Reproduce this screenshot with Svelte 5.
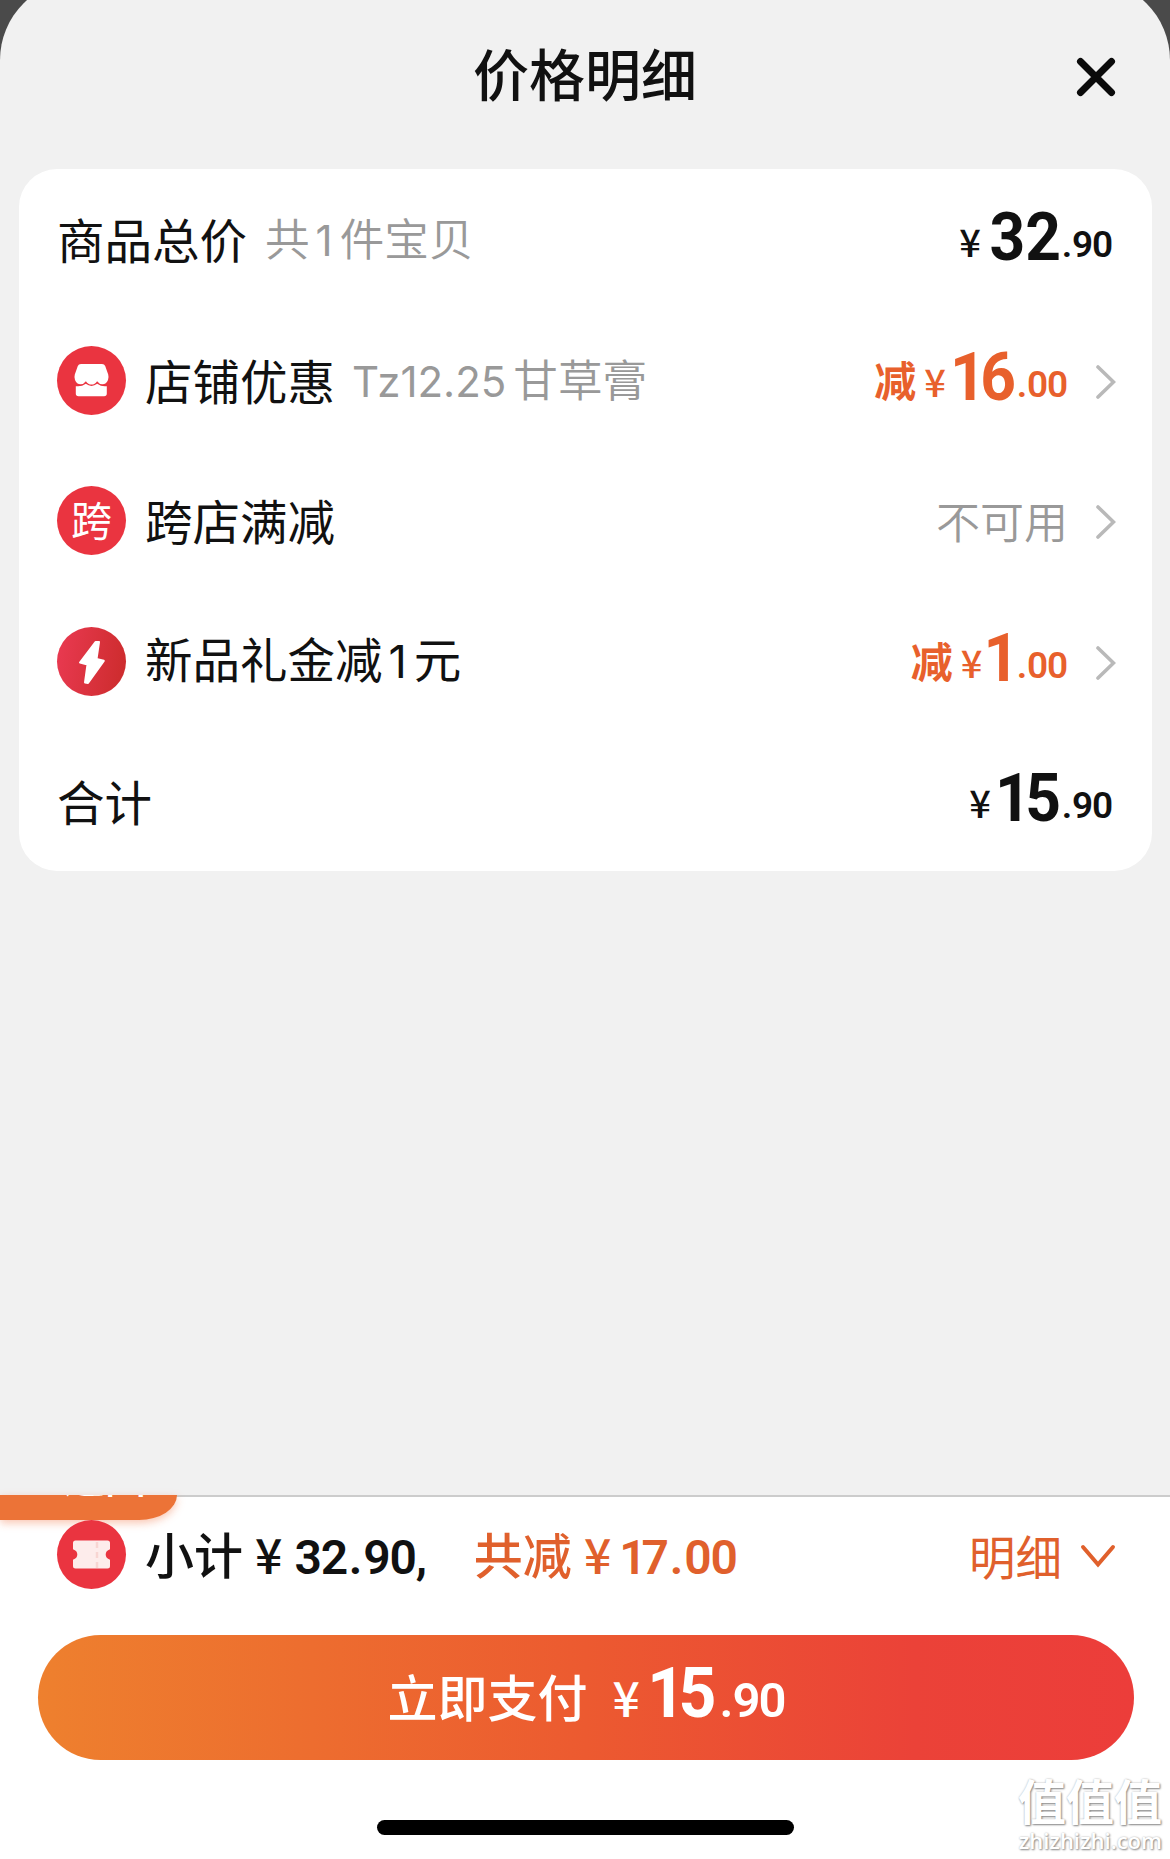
<script lang="ts">
	interface Price {
		int: string;
		dec: string;
	}

	interface Row {
		id: string;
		label: string;
		note?: string;
		icon?: 'shop' | 'cross' | 'bolt';
		price?: Price;
		off?: boolean;
		status?: string;
	}

	const rows: Row[] = [
		{ id: 'goods', label: '商品总价', note: '共1件宝贝', price: { int: '32', dec: '.90' } },
		{ id: 'shop', label: '店铺优惠', note: 'Tz12.25甘草膏', icon: 'shop', price: { int: '16', dec: '.00' }, off: true },
		{ id: 'cross', label: '跨店满减', icon: 'cross', status: '不可用' },
		{ id: 'gift', label: '新品礼金减1元', icon: 'bolt', price: { int: '1', dec: '.00' }, off: true },
		{ id: 'total', label: '合计', price: { int: '15', dec: '.90' } }
	];

	// latin digits get their own face and size inside chinese labels
	function split(text: string) {
		return text.split(/([A-Za-z0-9.]+)/).filter(Boolean);
	}

	const isLatin = (part: string) => /^[A-Za-z0-9.]/.test(part);
</script>

{#snippet mixed(text: string)}
	{#each split(text) as part}<span class:latin={isLatin(part)}>{part}</span>{/each}
{/snippet}

{#snippet digits(text: string)}
	{#each text.split('') as d}<span class:one={d === '1'} class:dot={d === '.'}>{d}</span>{/each}
{/snippet}

{#snippet amount(price: Price)}
	<span class="amount">
		<span class="yen">¥</span><span class="int">{@render digits(price.int)}</span><span class="dec">{@render digits(price.dec)}</span>
	</span>
{/snippet}

<div class="page">
	<section class="sheet">
		<header class="header">
			<span class="side"></span>
			<h1>价格明细</h1>
			<button class="side close" aria-label="close">
				<svg width="40" height="40" viewBox="0 0 40 40" fill="none" stroke="#0b0b0b" stroke-width="7" stroke-linecap="round">
					<path d="M4.500 4.500 35.500 35.500M35.500 4.500 4.500 35.500" />
				</svg>
			</button>
		</header>

		<div class="card">
			{#each rows as row (row.id)}
				<div class="row">
					{#if row.icon}
						<div class="badge" class:bolt={row.icon === 'bolt'}>
							{#if row.icon === 'shop'}
								<svg width="69" height="69" viewBox="0 0 69 69" fill="#fff">
									<path d="M24 18h21q2.400 0 3.200 2l3 8.500q.8 2.800-.2 5.500-1.600 4.200-5.600 4.200-3.200 0-5.300-3-2.200 3.400-5.600 3.400t-5.600-3.400q-2.100 3-5.300 3-4 0-5.600-4.200-1-2.700-.2-5.500l3-8.500q.8-2 3.200-2Z" />
									<path d="M18.800 40.200q5.700.8 10-2.400 5.700 4.200 11.400 0 4.500 3.200 9.600 2.400v7.300q0 2.700-2.700 2.700H21.500q-2.700 0-2.700-2.700Z" />
								</svg>
							{:else if row.icon === 'cross'}
								<span class="glyph">跨</span>
							{:else}
								<svg width="69" height="69" viewBox="0 0 69 69" fill="#fff" stroke="#fff" stroke-width="2" stroke-linejoin="round">
									<path d="M38.500 15 23 35.500 30.500 37.500 28 55.500 31 56 46.800 33.800 39.500 32 42 15Z" />
								</svg>
							{/if}
						</div>
					{/if}
					<span class="label">{@render mixed(row.label)}</span>
					{#if row.note}
						<span class="note">{@render mixed(row.note)}</span>
					{/if}
					<div class="value" class:off={row.off}>
						{#if row.off}<span class="minus">减</span>{/if}
						{#if row.price}{@render amount(row.price)}{/if}
						{#if row.status}<span class="status">{row.status}</span>{/if}
					</div>
					{#if row.icon}
						<svg class="arrow" width="20" height="34" viewBox="0 0 20 34" fill="none" stroke="#b9b9b9" stroke-width="3.600" stroke-linecap="round">
							<path d="M2 2 17.500 17 2 32" />
						</svg>
					{/if}
				</div>
			{/each}
		</div>
	</section>

	<footer class="footer">
		<div class="tab"><span>返回</span></div>
		<div class="summary">
			<div class="badge">
				<svg width="69" height="69" viewBox="0 0 69 69">
					<path fill="#fdeceb" d="M18.500 20.500h32q2.500 0 2.500 2.500v6.300q-4.300 1.500-4.300 5.200t4.300 5.200V46q0 2.500-2.500 2.500h-32Q16 48.500 16 46v-6.300q4.300-1.500 4.300-5.200T16 29.300V23q0-2.500 2.500-2.500Z" />
					<path stroke="#f8d5d2" stroke-width="2.500" stroke-dasharray="6 4" d="M40 22v26" />
				</svg>
			</div>
			<span class="sub">小计<i>¥</i><b>{@render digits('32.90')},</b></span>
			<span class="sub saved">共减<i>¥</i><b>{@render digits('17.00')}</b></span>
			<button class="detail">
				明细
				<svg width="36" height="26" viewBox="0 0 36 26" fill="none" stroke="currentColor" stroke-width="4" stroke-linecap="round">
					<path d="M3 3 18 20.500 33 3" />
				</svg>
			</button>
		</div>
		<button class="pay">
			<span class="pay-label">立即支付</span>
			<span class="pay-yen">¥</span><span class="pay-int">{@render digits('15')}</span><span class="pay-dec">{@render digits('.90')}</span>
		</button>
		<div class="home-bar"></div>
		<div class="watermark">
			<span class="mark">值值值</span>
			<span class="site">zhizhizhi.com</span>
		</div>
	</footer>
</div>

<style>
	:global(body) {
		background: #4a4a4a;
	}

	.page {
		width: 1170px;
		height: 1859px;
		display: flex;
		flex-direction: column;
		overflow: hidden;
		background: #4a4a4a;
		color: #111;
		font-family: Roboto, 'Noto Sans CJK SC', sans-serif;
	}

	button {
		padding: 0;
		border: 0;
		background: none;
		font: inherit;
		color: inherit;
	}

	svg {
		display: block;
	}

	/* top of the sheet sits above the viewport, only part of its corners shows */
	.sheet {
		flex: 1;
		margin-top: -20px;
		padding-top: 20px;
		border-radius: 80px 80px 0 0;
		background: #f1f1f1;
	}

	.header {
		height: 169px;
		padding: 0 54px;
		display: flex;
		justify-content: space-between;
		align-items: flex-start;
	}

	.side {
		width: 40px;
	}

	.close {
		margin-top: 57px;
	}

	h1 {
		margin: 32px 0 0;
		font: 500 56px/80px 'Noto Sans CJK SC', sans-serif;
	}

	.card {
		width: 1133px;
		height: 702px;
		margin-left: 19px;
		display: grid;
		grid-template-rows: repeat(5, 1fr);
		border-radius: 38px;
		background: #fff;
	}

	.row {
		display: flex;
		align-items: center;
		padding: 0 36px 0 38px;
	}

	.badge {
		width: 69px;
		height: 69px;
		margin-right: 19px;
		display: flex;
		align-items: center;
		justify-content: center;
		border-radius: 50%;
		background: #ea3440;
		color: #fff;
	}

	.row .badge {
		margin-top: 2px;
	}

	.badge.bolt {
		background: linear-gradient(100deg, #ea3a52, #cb2b2b);
	}

	.glyph {
		margin-bottom: 5px;
		font: 400 41px/60px 'Noto Sans CJK SC', sans-serif;
	}

	.label {
		font: 400 47.500px/70px 'Noto Sans CJK SC', sans-serif;
	}

	.label .latin {
		margin: 0 7px 0 6px;
		font-family: Inter, sans-serif;
		font-size: 45px;
	}

	.note {
		margin-left: 18px;
		font: 350 44.600px/70px 'Noto Sans CJK SC', sans-serif;
		color: #999;
	}

	.note .latin {
		margin: 0 7px 0 6px;
		font-family: Inter, sans-serif;
		font-size: 42px;
		font-weight: 400;
	}

	.note .latin:first-child {
		margin-left: -1px;
	}

	.value {
		margin-left: auto;
		display: flex;
		align-items: baseline;
	}

	.off {
		color: #e8602c;
	}

	.minus {
		margin-right: 8px;
		font: 700 42px/70px 'Noto Sans CJK SC', sans-serif;
	}

	.amount {
		display: flex;
		align-items: baseline;
		line-height: 70px;
	}

	.row:not(:has(.badge)) .value {
		margin-right: 4px;
	}

	.yen {
		margin-right: 5px;
		font-family: 'Noto Sans CJK SC', sans-serif;
		font-size: 38px;
		font-weight: 500;
	}

	.int {
		margin-left: -2px;
		font-size: 67px;
		font-weight: 700;
		transform: translateY(3px) scaleX(0.93);
		transform-origin: right;
	}

	.int .one {
		margin: 0 -6px 0 -4px;
	}

	.int .one:last-child {
		margin-right: -4px;
	}

	.dec {
		margin-left: 1px;
		font-size: 37px;
		font-weight: 600;
		letter-spacing: -1.200px;
	}

	.dec .dot {
		margin-right: 1px;
	}

	.status {
		margin-right: -1px;
		font: 350 44px/70px 'Noto Sans CJK SC', sans-serif;
		color: #999;
	}

	.arrow {
		margin: 5px 0 0 29px;
	}

	.footer {
		position: relative;
		height: 362px;
		border-top: 2px solid #ccc;
		background: #fff;
	}

	.tab {
		position: absolute;
		top: -2px;
		left: 0;
		width: 177px;
		height: 25px;
		overflow: hidden;
		border-radius: 0 0 38px 0 / 0 0 25px 0;
		background: #ec7337;
		box-shadow: 0 3px 8px rgba(240, 110, 60, 0.4);
	}

	.tab span {
		position: absolute;
		left: 64px;
		bottom: 21px;
		font: 500 41px/48px 'Noto Sans CJK SC', sans-serif;
		color: #fff;
	}

	.summary {
		position: relative;
		height: 69px;
		margin-top: 23px;
		padding: 0 54px 0 57px;
		display: flex;
		align-items: center;
	}

	.sub {
		display: flex;
		align-items: baseline;
		font: 500 49px/69px 'Noto Sans CJK SC', sans-serif;
	}

	.sub i {
		margin: 0 12px 0 12px;
		font: 500 48px/69px 'Noto Sans CJK SC', sans-serif;
	}

	.sub b {
		font: 600 48px/69px Roboto, sans-serif;
		letter-spacing: -1.200px;
	}

	.sub .dot {
		margin: 0 2px;
	}

	.sub .one {
		margin: 0 -4px 0 -4px;
	}

	.saved {
		margin-left: 48px;
		color: #e0602c;
	}

	.detail {
		margin-left: auto;
		display: flex;
		align-items: center;
		gap: 18px;
		font: 400 46.500px/69px 'Noto Sans CJK SC', sans-serif;
		color: #e0602c;
	}

	.detail svg {
		margin-top: 4px;
	}

	.pay {
		width: 1096px;
		height: 125px;
		margin: 46px 0 0 38px;
		padding-bottom: 10px;
		display: flex;
		align-items: baseline;
		justify-content: center;
		border-radius: 63px;
		background: linear-gradient(90deg, #ee802e, #ec5a30 50%, #eb4238 80%, #ec3d3a);
		color: #fff;
		line-height: 115px;
	}

	.pay-label {
		font: 500 50px/115px 'Noto Sans CJK SC', sans-serif;
	}

	.pay-yen {
		margin: 0 6px 0 25px;
		font-family: 'Noto Sans CJK SC', sans-serif;
		font-size: 48px;
		font-weight: 500;
	}

	.pay-int {
		font-size: 71px;
		font-weight: 700;
		transform: scaleX(0.93);
		transform-origin: right;
	}

	.pay-int .one {
		margin: 0 -7px 0 -4px;
	}

	.pay-dec {
		margin-left: 3px;
		font-size: 49px;
		font-weight: 600;
		letter-spacing: -2px;
	}

	.pay-dec .dot {
		margin-right: 1px;
	}

	.home-bar {
		width: 417px;
		height: 15px;
		margin: 60px auto 0;
		border-radius: 8px;
		background: #000;
	}

	.watermark {
		position: absolute;
		right: 8px;
		bottom: 3px;
		display: flex;
		flex-direction: column;
		align-items: flex-end;
		color: #fff;
		text-shadow: 1px 1px 2px #888, 0 0 2px #bbb;
	}

	.mark {
		font: 700 48px/52px 'Noto Sans CJK SC', sans-serif;
	}

	.site {
		font: 600 22px/31px 'Open Sans', sans-serif;
	}
</style>
